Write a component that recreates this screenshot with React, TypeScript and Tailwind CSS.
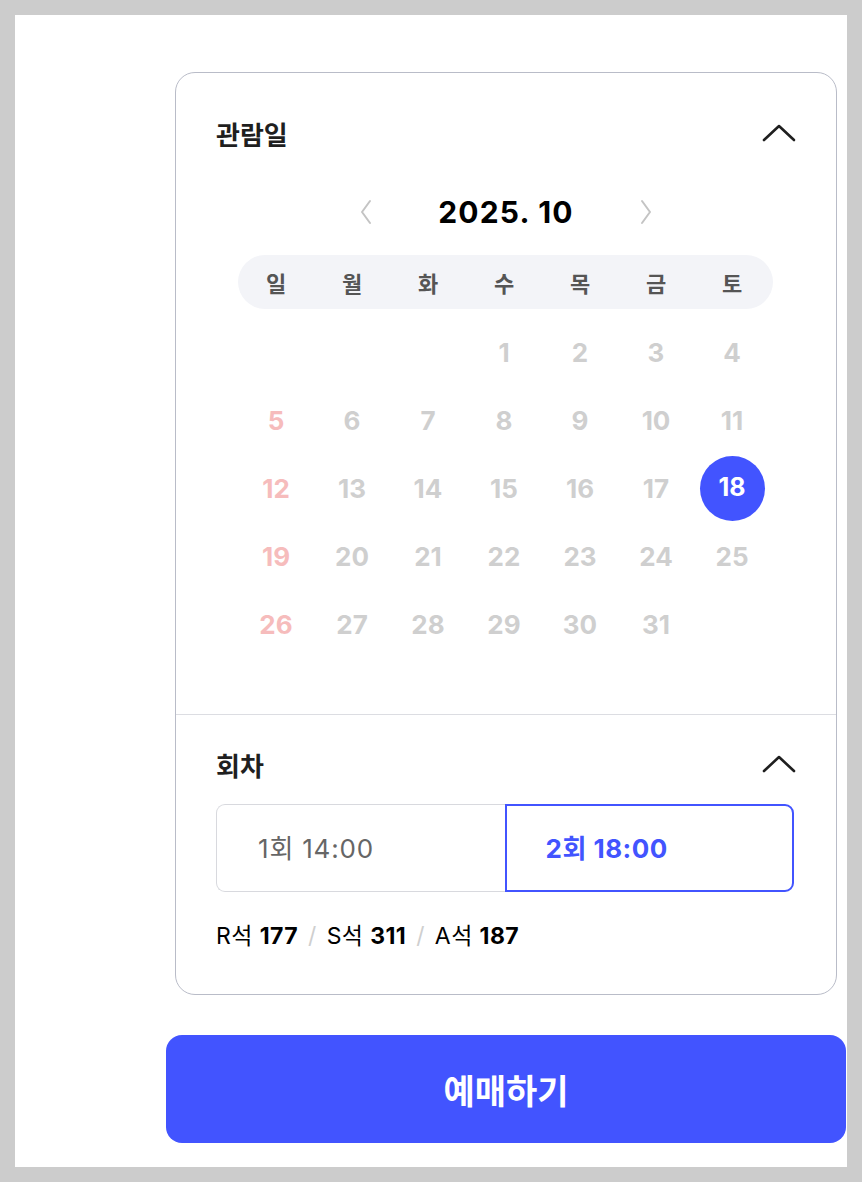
import React from "react";

const WEEKDAYS = ["일", "월", "화", "수", "목", "금", "토"];

const DAYS: (number | null)[] = [
  null, null, null, 1, 2, 3, 4,
  5, 6, 7, 8, 9, 10, 11,
  12, 13, 14, 15, 16, 17, 18,
  19, 20, 21, 22, 23, 24, 25,
  26, 27, 28, 29, 30, 31, null,
];

function ChevronUp() {
  return (
    <svg width="34" height="20" viewBox="0 0 34 20" fill="none">
      <path d="M2 17L17 3l15 14" stroke="#1f1f1f" strokeWidth="2.6" strokeLinecap="round" strokeLinejoin="round" />
    </svg>
  );
}

function Arrow({ dir }: { dir: "left" | "right" }) {
  return (
    <svg width="14" height="26" viewBox="0 0 14 26" fill="none">
      <path
        d={dir === "left" ? "M11 2L3 13l8 11" : "M3 2l8 11-8 11"}
        stroke="#c4c4c4"
        strokeWidth="2"
        strokeLinecap="round"
        strokeLinejoin="round"
      />
    </svg>
  );
}

export default function App() {
  return (
    <div className="min-h-[1182px] bg-[#cccccc] p-[15px] font-['Inter','Noto_Sans_CJK_KR',sans-serif]">
      <div className="h-[1152px] overflow-hidden bg-white pl-[151px] pt-[57px]">
        <div className="w-[680px]">
          <div className="mx-[9px] rounded-[20px] border border-[#b9bcc8]">
            {/* 관람일 */}
            <div className="px-[40px] pt-[39px] pb-[56px]">
              <div className="flex h-[42px] items-center justify-between">
                <span className="text-[26px] font-bold text-[#1f1f1f] font-['Noto_Sans_CJK_KR',sans-serif]">관람일</span>
                <ChevronUp />
              </div>
              <div className="mt-[36px] flex h-[44px] items-center justify-center">
                <div className="flex w-[24px] justify-center"><Arrow dir="left" /></div>
                <div className="w-[256px] text-center text-[30px] font-bold tracking-[1.2px] text-black">2025. 10</div>
                <div className="flex w-[24px] justify-center"><Arrow dir="right" /></div>
              </div>
              <div className="mt-[21px] ml-[22px] w-[535px]">
                <div className="grid h-[54px] grid-cols-[repeat(7,76px)] items-center rounded-full bg-[#f3f4f8]">
                  {WEEKDAYS.map((w) => (
                    <span key={w} className="text-center text-[22px] font-bold text-[#555] font-['Noto_Sans_CJK_KR',sans-serif]">
                      {w}
                    </span>
                  ))}
                </div>
                <div className="mt-[9px] grid grid-cols-[repeat(7,76px)]">
                  {DAYS.map((d, i) => (
                    <div key={i} className="flex h-[68px] items-center justify-center">
                      {d === 18 ? (
                        <span className="flex h-[65px] w-[65px] items-center justify-center rounded-full bg-[#4254ff] text-[25px] font-bold text-white">
                          18
                        </span>
                      ) : d ? (
                        <span className={`text-[26px] font-bold ${i % 7 === 0 ? "text-[#f6bcbc]" : "text-[#cfcfcf]"}`}>{d}</span>
                      ) : null}
                    </div>
                  ))}
                </div>
              </div>
            </div>

            {/* 회차 */}
            <div className="border-t border-[#dcdde2] px-[40px] pt-[28px] pb-[42px]">
              <div className="flex h-[42px] items-center justify-between">
                <span className="text-[26px] font-bold text-[#1f1f1f] font-['Noto_Sans_CJK_KR',sans-serif]">회차</span>
                <ChevronUp />
              </div>
              <div className="mt-[19px] mr-[2px] flex h-[88px]">
                <div className="flex flex-1 items-center rounded-l-[9px] border border-r-0 border-[#d8d9de] pl-[41px] text-[26px] tracking-[0.8px] text-[#666]">
                  1회 14:00
                </div>
                <div className="flex flex-1 items-center rounded-r-[9px] border-2 border-[#4254ff] pl-[39px] text-[26px] font-bold tracking-[0.5px] text-[#4254ff]">
                  2회 18:00
                </div>
              </div>
              <div className="mt-[28px] flex h-[32px] items-center text-[23px] tracking-[0.4px] text-black">
                <span>R석 <b className="font-bold">177</b></span>
                <span className="mx-[10px] text-[#cfcfcf]">/</span>
                <span>S석 <b className="font-bold">311</b></span>
                <span className="mx-[10px] text-[#cfcfcf]">/</span>
                <span>A석 <b className="font-bold">187</b></span>
              </div>
            </div>
          </div>

          <button className="mt-[40px] flex h-[108px] w-[680px] items-center justify-center rounded-[16px] bg-[#4254ff] text-[34px] font-bold text-white font-['Noto_Sans_CJK_KR',sans-serif]">
            예매하기
          </button>
        </div>
      </div>
    </div>
  );
}
